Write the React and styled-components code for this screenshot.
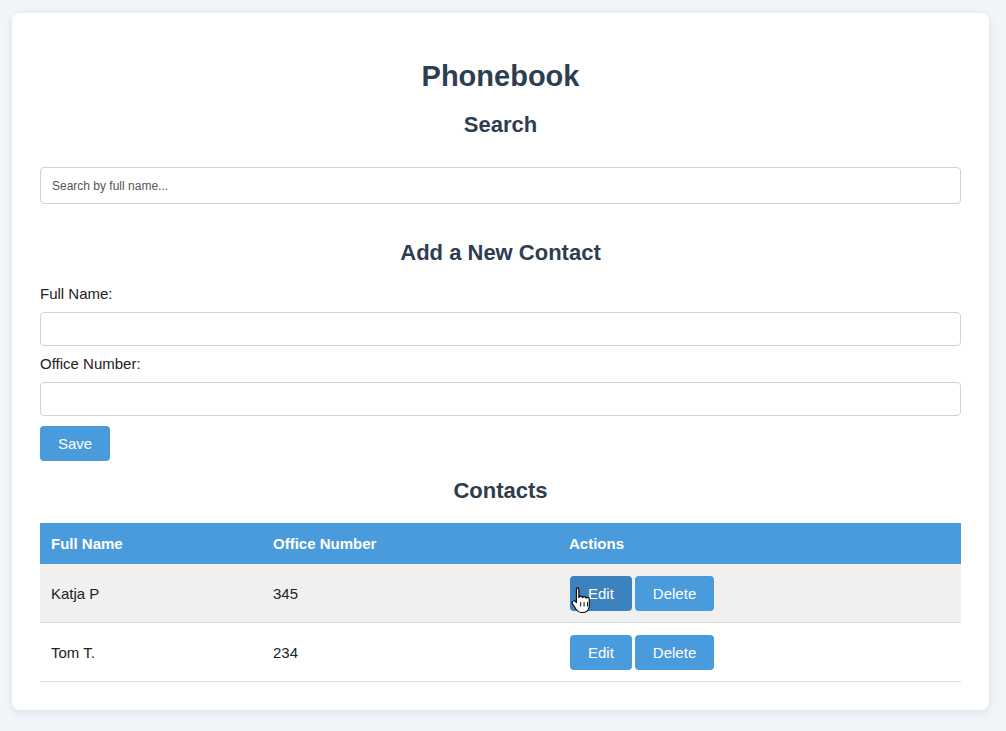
import React from 'react'
import styled, { createGlobalStyle } from 'styled-components'

const GlobalStyle = createGlobalStyle`
  html, body {
    margin: 0;
    padding: 0;
    background: #f1f5f9;
    font-family: Arial, "Liberation Sans", sans-serif;
  }
`

const Page = styled.div`
  padding: 13px 17px 20px 12px;
`

const Card = styled.div`
  background: #fff;
  border-radius: 8px;
  box-shadow: 0 2px 8px rgba(0, 0, 0, 0.09);
  padding: 28px 28px 28px;
`

const Title = styled.h1`
  margin: 18px 0 0;
  font-size: 29px;
  line-height: 34px;
  text-align: center;
  color: #2c3e50;
`

const SectionTitle = styled.h2`
  margin: ${p => p.$top}px 0 0;
  font-size: 22px;
  line-height: 26px;
  text-align: center;
  color: #2c3e50;
`

const TextInput = styled.input`
  display: block;
  box-sizing: border-box;
  width: 100%;
  height: ${p => p.$h}px;
  margin-top: ${p => p.$top}px;
  padding: 0 11px;
  border: 1px solid #cfd3d7;
  border-radius: 4px;
  font-family: Arial, "Liberation Sans", sans-serif;
  font-size: 12px;
  color: #333;
  &::placeholder {
    color: #555;
  }
`

const Label = styled.label`
  display: block;
  margin-top: ${p => p.$top}px;
  font-size: 15px;
  line-height: 18px;
  color: #222;
`

const Button = styled.button`
  position: relative;
  height: 35px;
  padding: 0 18px;
  border: none;
  border-radius: 4px;
  background: ${p => (p.$hover ? '#3b82be' : '#4a9bdc')};
  color: #fff;
  font-family: Arial, "Liberation Sans", sans-serif;
  font-size: 15px;
  cursor: pointer;
`

const SaveRow = styled.div`
  margin-top: 10px;
`

const Table = styled.table`
  width: 100%;
  margin-top: 19px;
  border-collapse: collapse;
  table-layout: fixed;
  font-size: 15px;
`

const Th = styled.th`
  box-sizing: border-box;
  width: ${p => (p.$w ? `${p.$w}px` : 'auto')};
  padding: 12px 11px;
  line-height: 17px;
  text-align: left;
  background: #4a9bdc;
  color: #fff;
  font-weight: bold;
`

const Row = styled.tr`
  background: ${p => (p.$hover ? '#f0f0f0' : '#fff')};
  border-bottom: 1px solid #dddddd;
`

const Td = styled.td`
  padding: 12px 11px 11px 11px;
  color: #222;
  line-height: 17px;
  vertical-align: middle;
`

const Actions = styled.div`
  display: flex;
  gap: 3px;
  padding-left: 1px;
`

const Cursor = styled.svg`
  position: absolute;
  left: 1px;
  top: 9px;
  pointer-events: none;
`

const HandCursor = () => (
  <Cursor width="22" height="32" viewBox="0 0 20 27">
    <path
      d="M5.5 1.5c1 0 1.6.7 1.6 1.6v7.2c.3-.8 1-1.2 1.7-1.2.9 0 1.5.6 1.6 1.4.3-.6.9-1 1.6-1 .9 0 1.5.6 1.6 1.5.3-.5.8-.8 1.4-.8 1 0 1.6.7 1.6 1.7v5.8c0 3.6-2.3 6.3-5.9 6.3H9.3c-2 0-3.3-.9-4.4-2.5L1.4 16c-.6-.9-.4-1.9.4-2.4.7-.5 1.7-.3 2.3.4l.8 1V3.1c0-.9.6-1.6 1.6-1.6z"
      fill="#fff"
      stroke="#000"
      strokeWidth="1"
      strokeLinejoin="round"
    />
    <path d="M8.8 14.5v4M11.9 14.5v4M15 14.5v4" stroke="#000" strokeWidth="0.9" />
  </Cursor>
)

const contacts = [
  { name: 'Katja P', number: '345', hover: true },
  { name: 'Tom T.', number: '234', hover: false },
]

const App = () => {
  return (
    <Page>
      <GlobalStyle />
      <Card>
        <Title>Phonebook</Title>
        <SectionTitle $top={19}>Search</SectionTitle>
        <TextInput $h={37} $top={29} placeholder="Search by full name..." />

        <SectionTitle $top={36}>Add a New Contact</SectionTitle>
        <Label $top={19}>Full Name:</Label>
        <TextInput $h={34} $top={9} />
        <Label $top={9}>Office Number:</Label>
        <TextInput $h={34} $top={9} />
        <SaveRow>
          <Button>Save</Button>
        </SaveRow>

        <SectionTitle $top={17}>Contacts</SectionTitle>
        <Table>
          <thead>
            <tr>
              <Th $w={222}>Full Name</Th>
              <Th $w={296}>Office Number</Th>
              <Th>Actions</Th>
            </tr>
          </thead>
          <tbody>
            {contacts.map(c => (
              <Row key={c.name} $hover={c.hover}>
                <Td>{c.name}</Td>
                <Td>{c.number}</Td>
                <Td>
                  <Actions>
                    <Button $hover={c.hover}>
                      Edit
                      {c.hover && <HandCursor />}
                    </Button>
                    <Button>Delete</Button>
                  </Actions>
                </Td>
              </Row>
            ))}
          </tbody>
        </Table>
      </Card>
    </Page>
  )
}

export default App
